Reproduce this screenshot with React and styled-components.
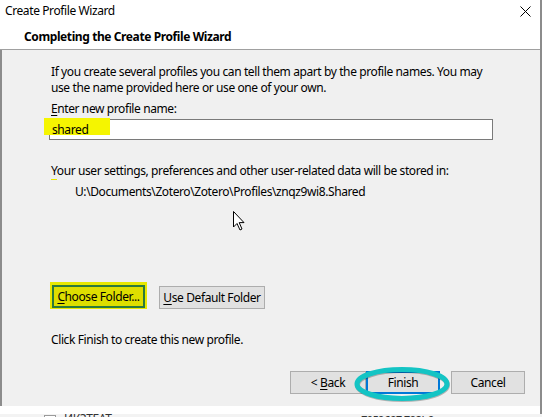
import React from "react";
import styled, { createGlobalStyle } from "styled-components";

const Global = createGlobalStyle`
  html, body { margin: 0; padding: 0; background: #ffffff; }
  body {
    font-family: "Noto Sans", "Segoe UI", sans-serif;
    font-size: 12px;
    letter-spacing: -0.4px;
    color: #000;
  }
`;

const Page = styled.div`
  width: 542px;
  height: 417px;
  overflow: hidden;
  display: flex;
  flex-direction: column;
`;

const Dialog = styled.div`
  width: 540px;
  height: 414px;
  border-right: 2px solid #8c8c8c;
  background: #ffffff;
  display: flex;
  flex-direction: column;
  flex: none;
`;

const TitleBar = styled.div`
  height: 22px;
  display: flex;
  align-items: center;
  justify-content: space-between;
  padding: 0 9px 0 5px;
  line-height: 16px;
`;

const Header = styled.div`
  height: 28px;
  border-bottom: 1px solid #a0a0a0;
  padding: 7px 0 0 24px;
  box-sizing: border-box;
  font-weight: 700;
  line-height: 16px;
`;

const Content = styled.div`
  height: 356px;
  background: #f0f0f0;
  border-left: 2px solid #8c8c8c;
  display: flex;
  flex-direction: column;
  position: relative;
  padding: 14px 15px 12px 47px;
  box-sizing: border-box;
`;

const Text = styled.div`
  line-height: 16px;
  margin-top: ${(p) => p.$mt || 0}px;
  padding-left: ${(p) => 2 + (p.$indent || 0)}px;
  white-space: nowrap;
`;

const Mn = styled.span`
  text-decoration: underline;
  text-underline-offset: 2px;
`;

const MarkedLetter = styled.span`
  border-bottom: 1px solid #e8e800;
`;

const Field = styled.div`
  position: relative;
  margin-top: 2px;
  width: 444px;
  height: 21px;
  box-sizing: border-box;
  border: 1px solid #7a7a7a;
  background: #ffffff;
  display: flex;
  align-items: center;
  padding-left: 2px;
`;

const Marker = styled.span`
  position: absolute;
  left: -6px;
  top: -2px;
  width: 66px;
  height: 17px;
  background: #f5f500;
`;

const FieldText = styled.span`
  position: relative;
  line-height: 16px;
`;

const Row = styled.div`
  display: flex;
  align-items: center;
  gap: ${(p) => p.$gap || 0}px;
  margin-top: ${(p) => p.$mt || 0}px;
  padding-left: 2px;
`;

const Highlight = styled.div`
  background: #e8e800;
  padding: 3px 2px 1px 2px;
  margin-top: -4px;
  margin-left: -1px;
  display: flex;
`;

const Button = styled.button`
  font: inherit;
  letter-spacing: -0.4px;
  color: #000;
  height: 23px;
  width: ${(p) => p.$w}px;
  box-sizing: border-box;
  background: ${(p) => (p.$marked ? "#dede00" : "#e1e1e1")};
  border: ${(p) =>
    p.$marked ? "2px solid #2c7a3c" : p.$default ? "2px solid #0078d7" : "1px solid #adadad"};
  padding: 0;
  line-height: 16px;
  display: flex;
  align-items: center;
  justify-content: center;
  position: relative;
`;

const Footer = styled.div`
  margin-top: auto;
  display: flex;
  justify-content: flex-end;
  align-items: center;
`;

const NavPair = styled.div`
  display: flex;
  margin-right: 11px;
`;

const Oval = styled.svg`
  position: absolute;
  left: -13px;
  top: -6px;
  width: 94px;
  height: 34px;
  overflow: visible;
  pointer-events: none;
`;

const Cursor = styled.svg`
  position: absolute;
  left: 230px;
  top: 160px;
`;

const Underlay = styled.div`
  height: 3px;
  background: #f3f3f3;
  overflow: hidden;
  display: flex;
  align-items: flex-start;
  position: relative;
`;

const UnderBox = styled.div`
  width: 10px;
  height: 6px;
  border: 1px solid #9a9a9a;
  margin: 1px 0 0 44px;
  background: #fff;
`;

const UnderText = styled.div`
  font-size: 12px;
  line-height: 12px;
  margin: 0 0 0 ${(p) => p.$ml}px;
  color: #333;
  transform: translateY(-1px);
  white-space: nowrap;
`;

function CloseIcon() {
  return (
    <svg width="11" height="11" viewBox="0 0 11 11">
      <path d="M0.5 0.5 L10.5 10.5 M10.5 0.5 L0.5 10.5" stroke="#000" strokeWidth="1" />
    </svg>
  );
}

export default function App() {
  return (
    <>
      <Global />
      <Page>
        <Dialog>
          <TitleBar>
            <span>Create Profile Wizard</span>
            <CloseIcon />
          </TitleBar>
          <Header>Completing the Create Profile Wizard</Header>
          <Content>
            <Text>
              If you create several profiles you can tell them apart by the profile names. You may
              <br />
              use the name provided here or use one of your own.
            </Text>
            <Text $mt={5}>
              <Mn>E</Mn>nter new profile name:
            </Text>
            <Field>
              <Marker />
              <FieldText>shared</FieldText>
            </Field>
            <Text $mt={23}>
              <MarkedLetter>Y</MarkedLetter>our user settings, preferences and other user-related data will be stored in:
            </Text>
            <Text $mt={5} $indent={24}>
              U:\Documents\Zotero\Zotero\Profiles\znqz9wi8.Shared
            </Text>
            <Row $mt={86} $gap={12}>
              <Highlight>
                <Button $w={93} $marked>
                  <span>
                    <Mn>C</Mn>hoose Folder...
                  </span>
                </Button>
              </Highlight>
              <Button $w={106}>
                <span>
                  <Mn>U</Mn>se Default Folder
                </span>
              </Button>
            </Row>
            <Text $mt={23}>Click Finish to create this new profile.</Text>
            <Footer>
              <NavPair>
                <Button $w={76}>
                  <span>
                    &lt; <Mn>B</Mn>ack
                  </span>
                </Button>
                <Button $w={74} $default>
                  <span>Finish</span>
                  <Oval viewBox="0 0 94 34">
                    <ellipse cx="47.5" cy="18" rx="45" ry="14.5" fill="none" stroke="rgba(0,0,0,0.25)" strokeWidth="5" />
                    <ellipse cx="47" cy="17" rx="45" ry="14.5" fill="none" stroke="#14c4c4" strokeWidth="5" />
                  </Oval>
                </Button>
              </NavPair>
              <Button $w={74}>
                <span>Cancel</span>
              </Button>
            </Footer>
            <Cursor width="14" height="22" viewBox="0 0 14 22">
              <path d="M1.5 1.5 L1.5 17 L5 13.5 L8 20 L10 19 L7.2 12.6 L12 12.6 Z" fill="#fff" stroke="#000" strokeWidth="1" strokeLinejoin="miter" />
            </Cursor>
          </Content>
        </Dialog>
        <Underlay>
          <UnderBox />
          <UnderText $ml={8}>ИКЗТЕАТ</UnderText>
          <UnderText $ml={250}>тегосот тозьо</UnderText>
        </Underlay>
      </Page>
    </>
  );
}
